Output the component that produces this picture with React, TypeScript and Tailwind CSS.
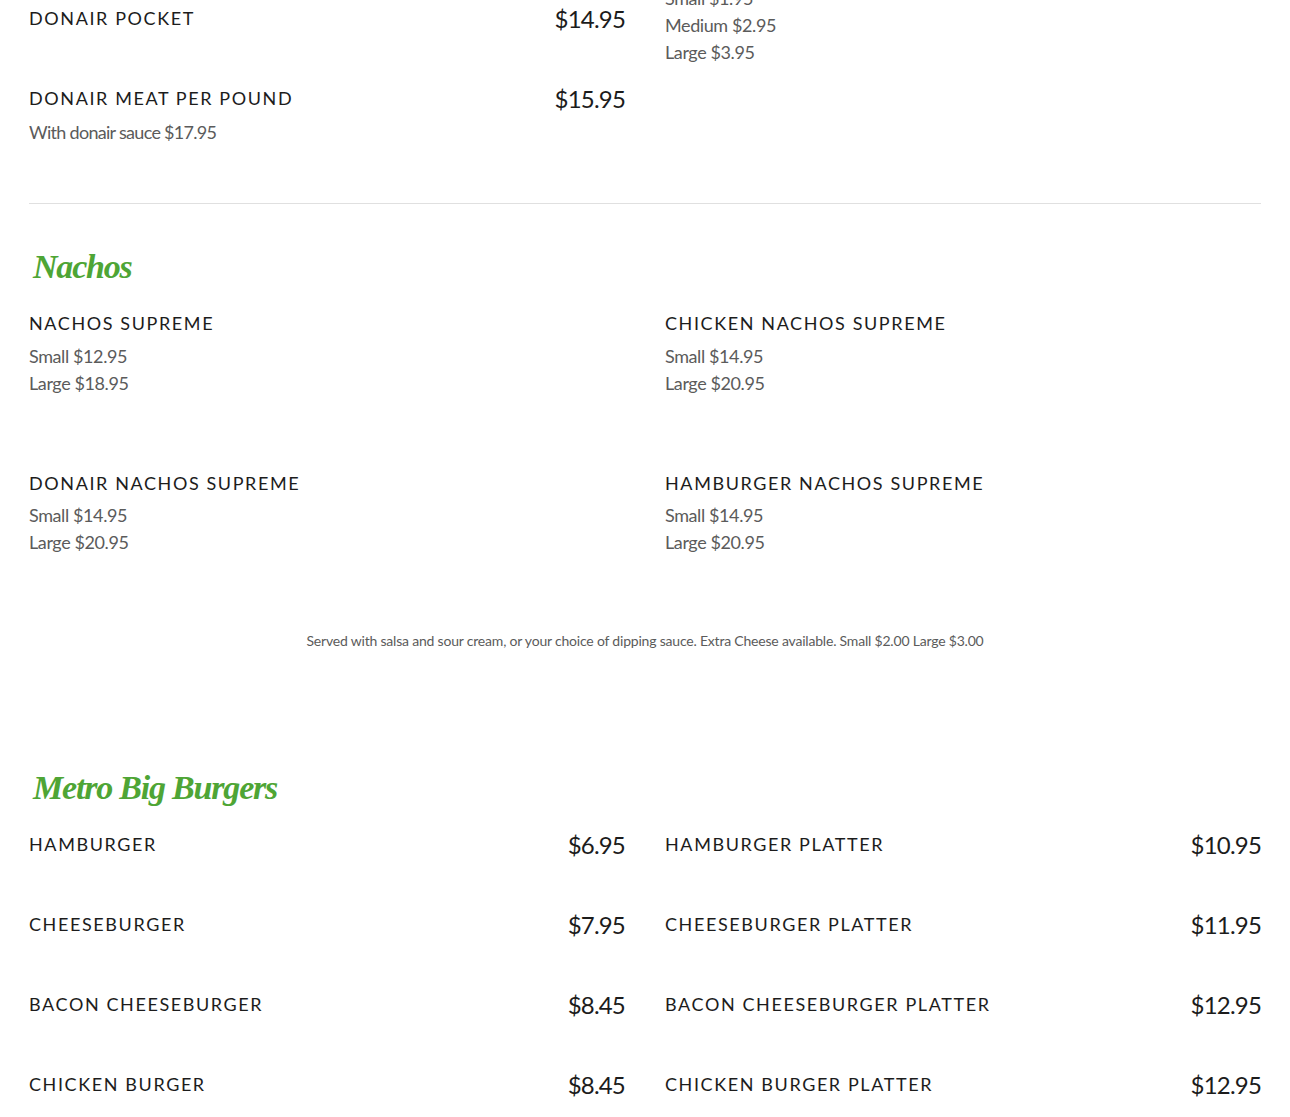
const body = "font-['Lato','Open_Sans',sans-serif]";

function Name({ children }: { children: string }) {
  return <h4 className="h-[27px] text-[18px] leading-[27px] font-normal tracking-[1.6px] text-[#1c1c1c] uppercase">{children}</h4>;
}

function Price({ children }: { children: string }) {
  return <span className="text-[24px] leading-[27px] tracking-[-0.8px] text-[#1c1c1c]">{children}</span>;
}

function Priced({ name, price }: { name: string; price: string }) {
  return (
    <div className="flex h-[80px] items-start justify-between">
      <Name>{name}</Name>
      <Price>{price}</Price>
    </div>
  );
}

function Lines({ lines }: { lines: string[] }) {
  return (
    <div className="text-[18px] leading-[27px] tracking-[-0.4px] text-[#5b5b5b]">
      {lines.map((l) => (
        <p key={l}>{l}</p>
      ))}
    </div>
  );
}

function Heading({ children }: { children: string }) {
  return (
    <h2 className="h-[48px] pl-[4px] font-['Liberation_Serif',serif] text-[34px] leading-[48px] font-bold tracking-[-1.2px] text-[#4ea535] italic">
      {children}
    </h2>
  );
}

const burgers = [
  ["Hamburger", "$6.95", "Hamburger Platter", "$10.95"],
  ["Cheeseburger", "$7.95", "Cheeseburger Platter", "$11.95"],
  ["Bacon Cheeseburger", "$8.45", "Bacon Cheeseburger Platter", "$12.95"],
  ["Chicken Burger", "$8.45", "Chicken Burger Platter", "$12.95"],
];

export default function App() {
  return (
    <div className={`h-[1117px] overflow-hidden bg-white ${body}`}>
      <div className="mt-[-15px] px-[29px]">
        <div className="grid grid-cols-2 gap-x-[40px]">
          <div className="pt-[20px]">
            <Priced name="Donair Pocket" price="$14.95" />
            <div className="flex items-start justify-between">
              <Name>Donair Meat Per Pound</Name>
              <Price>$15.95</Price>
            </div>
            <p className="mt-[7px] text-[18px] leading-[27px] tracking-[-0.7px] text-[#5b5b5b]">With donair sauce $17.95</p>
          </div>
          <Lines lines={["Small $1.95", "Medium $2.95", "Large $3.95"]} />
        </div>

        <hr className="mt-[57px] border-t border-[#e0e0e0]" />

        <div className="mt-[39px]">
          <Heading>Nachos</Heading>
        </div>
        <div className="mt-[19px] grid grid-cols-2 gap-x-[40px]">
          <div className="h-[160px]">
            <Name>Nachos Supreme</Name>
            <div className="mt-[6px]"><Lines lines={["Small $12.95", "Large $18.95"]} /></div>
          </div>
          <div className="h-[160px]">
            <Name>Chicken Nachos Supreme</Name>
            <div className="mt-[6px]"><Lines lines={["Small $14.95", "Large $20.95"]} /></div>
          </div>
          <div>
            <Name>Donair Nachos Supreme</Name>
            <div className="mt-[5px]"><Lines lines={["Small $14.95", "Large $20.95"]} /></div>
          </div>
          <div>
            <Name>Hamburger Nachos Supreme</Name>
            <div className="mt-[5px]"><Lines lines={["Small $14.95", "Large $20.95"]} /></div>
          </div>
        </div>
        <p className="mt-[75px] text-center text-[14px] leading-[20px] tracking-[-0.2px] text-[#5b5b5b]">
          Served with salsa and sour cream, or your choice of dipping sauce. Extra Cheese available. Small $2.00 Large $3.00
        </p>

        <div className="mt-[113px]">
          <Heading>Metro Big Burgers</Heading>
        </div>
        <div className="mt-[19px] grid grid-cols-2 gap-x-[40px]">
          {burgers.map(([a, ap, b, bp]) => (
            <div key={a} className="contents">
              <Priced name={a} price={ap} />
              <Priced name={b} price={bp} />
            </div>
          ))}
        </div>
      </div>
    </div>
  );
}
